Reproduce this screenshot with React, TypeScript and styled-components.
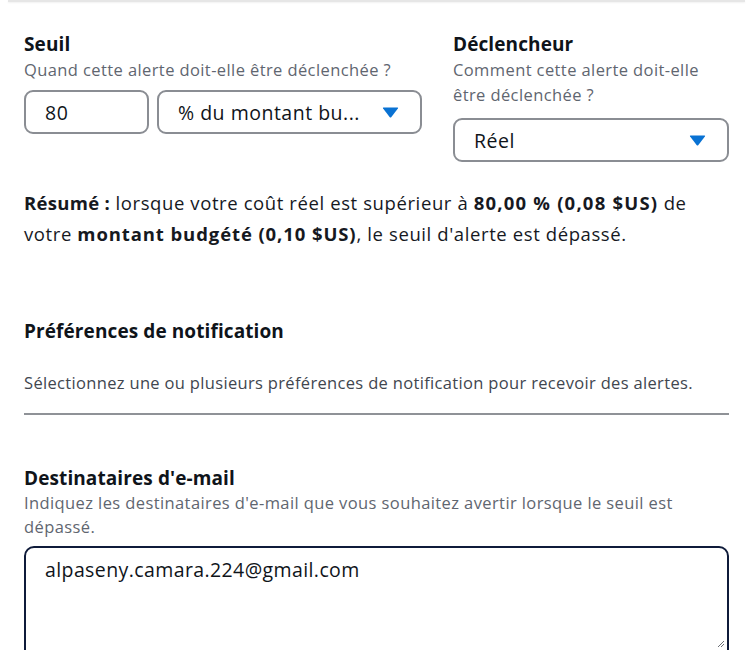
import React from "react";
import styled, { createGlobalStyle } from "styled-components";

const Global = createGlobalStyle`
  html, body { margin: 0; padding: 0; background: #ffffff; }
  body { font-family: "Open Sans", "Noto Sans", sans-serif; color: #0f141a; }
  * { box-sizing: border-box; }
`;

const Page = styled.div`
  width: 753px;
  height: 650px;
  overflow: hidden;
  padding: 0 24px;
  display: flex;
  flex-direction: column;
  & > * { flex-shrink: 0; }
`;

const TopEdge = styled.div`
  height: 2px;
  margin: 0 -16px;
  background: #e6e6e6;
  box-shadow: 0 1px 2px rgba(0, 0, 0, 0.06);
`;

const Row = styled.div`
  display: grid;
  grid-template-columns: 398px 276px;
  column-gap: 31px;
  margin-top: 29px;
`;

const Field = styled.div`
  display: flex;
  flex-direction: column;
  & > * { flex-shrink: 0; }
`;

const Label = styled.div`
  font-weight: 700;
  font-size: 19px;
  line-height: 26px;
  letter-spacing: 0.1px;
  color: #0f141a;
`;

const Desc = styled.div<{ $lh?: number }>`
  font-size: 16.5px;
  line-height: ${(p) => p.$lh ?? 25}px;
  letter-spacing: 0.4px;
  color: #5f6670;
`;

const Controls = styled.div<{ $mt: number }>`
  display: flex;
  gap: 8px;
  margin-top: ${(p) => p.$mt}px;
`;

const Box = styled.div<{ $w?: number }>`
  height: 44px;
  border: 2px solid #8a8d93;
  border-radius: 9px;
  display: flex;
  align-items: center;
  padding: 0 0 0 19px;
  font-size: 19.5px;
  letter-spacing: 0.5px;
  color: #0f141a;
  ${(p) => (p.$w ? `width: ${p.$w}px;` : "flex: 1;")}
`;

const SelectBox = styled(Box)`
  justify-content: space-between;
  padding-right: 21px;
`;

const Caret = styled.svg`
  width: 17px;
  height: 11px;
  fill: #0972d3;
`;

const Arrow = () => (
  <Caret viewBox="0 0 17 11">
    <path d="M1.5 0.5 H15.5 Q16.5 0.5 15.9 1.4 L9.2 10.2 Q8.5 11 7.8 10.2 L1.1 1.4 Q0.5 0.5 1.5 0.5 Z" />
  </Caret>
);

const Summary = styled.p`
  margin: 25px 0 0 0;
  font-size: 18.5px;
  line-height: 31px;
  letter-spacing: 0.6px;
  color: #16191f;
`;

const Strong = styled.b<{ $ls: number }>`
  font-weight: 700;
  letter-spacing: ${(p) => p.$ls}px;
`;

const SectionTitle = styled.div`
  margin-top: 69px;
  font-weight: 700;
  font-size: 19px;
  line-height: 26px;
  letter-spacing: 0.1px;
  color: #0f141a;
`;

const SectionDesc = styled.div`
  margin-top: 28px;
  font-size: 16.5px;
  line-height: 22px;
  letter-spacing: 0.33px;
  color: #41464f;
`;

const Divider = styled.div`
  margin-top: 19px;
  height: 2px;
  background: #8f9297;
`;

const EmailField = styled(Field)`
  margin-top: 50px;
`;

const TextArea = styled.div`
  margin-top: 7px;
  height: 120px;
  border: 2px solid #0f1b3a;
  border-radius: 10px;
  padding: 10px 19px;
  font-size: 19.5px;
  line-height: 24px;
  letter-spacing: 0.4px;
  color: #0f141a;
  position: relative;
`;

const Grip = styled.svg`
  position: absolute;
  right: 2px;
  top: 90px;
  width: 10px;
  height: 10px;
  stroke: #6b6f76;
  stroke-width: 1;
`;

export default function App() {
  return (
    <>
      <Global />
      <Page>
        <TopEdge />
        <Row>
          <Field>
            <Label>Seuil</Label>
            <Desc>Quand cette alerte doit-elle être déclenchée ?</Desc>
            <Controls $mt={8}>
              <Box $w={125}>80</Box>
              <SelectBox>
                <span>% du montant bu...</span>
                <Arrow />
              </SelectBox>
            </Controls>
          </Field>
          <Field>
            <Label>Déclencheur</Label>
            <Desc>
              Comment cette alerte doit-elle
              <br />
              être déclenchée ?
            </Desc>
            <Controls $mt={11}>
              <SelectBox>
                <span>Réel</span>
                <Arrow />
              </SelectBox>
            </Controls>
          </Field>
        </Row>
        <Summary>
          <Strong $ls={0.3}>Résumé :</Strong> lorsque votre coût réel est
          supérieur à <Strong $ls={1.2}>80,00 % (0,08 $US)</Strong> de votre{" "}
          <Strong $ls={0.9}>montant budgété (0,10 $US)</Strong>, le seuil
          d'alerte est dépassé.
        </Summary>
        <SectionTitle>Préférences de notification</SectionTitle>
        <SectionDesc>
          Sélectionnez une ou plusieurs préférences de notification pour recevoir
          des alertes.
        </SectionDesc>
        <Divider />
        <EmailField>
          <Label>Destinataires d'e-mail</Label>
          <Desc $lh={24}>
            Indiquez les destinataires d'e-mail que vous souhaitez avertir
            lorsque le seuil est dépassé.
          </Desc>
          <TextArea>
            alpaseny.camara.224@gmail.com
            <Grip viewBox="0 0 10 10">
              <path d="M9 3 L3 9 M9 6 L6 9" />
            </Grip>
          </TextArea>
        </EmailField>
      </Page>
    </>
  );
}
